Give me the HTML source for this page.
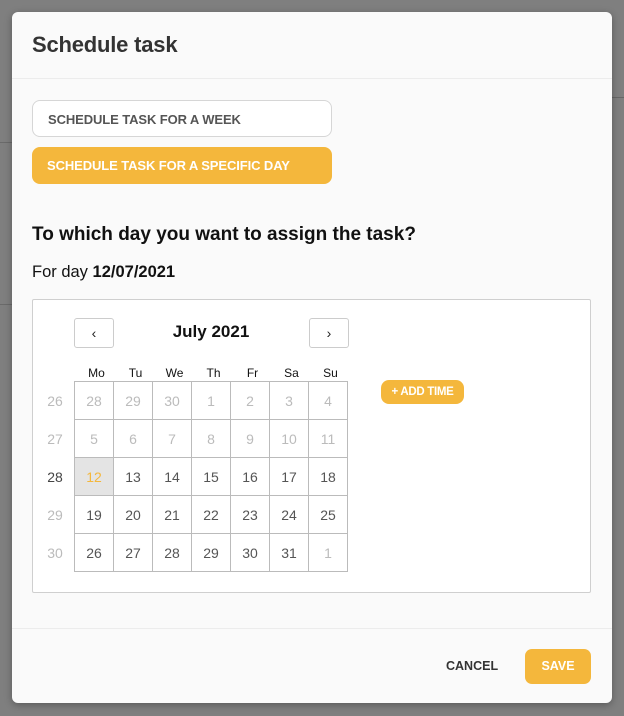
<!DOCTYPE html>
<html><head><style>
*{box-sizing:border-box;margin:0;padding:0}
body{width:624px;height:716px;background:#7f7f7f;font-family:"Liberation Sans",sans-serif;position:relative;overflow:hidden}
.modal{position:absolute;left:12px;top:12px;width:600px;height:691px;background:#fafafa;border-radius:6px;box-shadow:0 2px 8px rgba(0,0,0,.3)}
.hdr{height:67px;border-bottom:1px solid #ececec;padding:20px 20px}
.hdr h1{font-size:22px;font-weight:bold;color:#333;letter-spacing:-0.2px}
.btn{position:absolute;left:20px;width:300px;height:37px;border-radius:8px;font-size:13px;font-weight:bold;padding-left:15px;line-height:37px;letter-spacing:-0.1px}
.b1{top:88px;background:#fff;border:1px solid #d6d6d6;color:#555}
.b2{top:135px;background:#f4b73c;color:#fff}
.q{position:absolute;left:20px;top:212px;font-size:19px;font-weight:bold;color:#111}
.fd{position:absolute;left:20px;top:251px;font-size:16.5px;color:#111}
.cal{position:absolute;left:20px;top:287px;width:559px;height:294px;background:#fff;border:1px solid #cfcfcf;border-radius:2px}
.nav{position:absolute;top:18px;width:40px;height:30px;border:1px solid #ccc;border-radius:3px;text-align:center;line-height:28px;font-size:14px;color:#222}
.title{position:absolute;left:110px;width:136px;top:22px;text-align:center;font-size:17px;font-weight:bold;color:#111}
.dow{position:absolute;top:66px;width:39px;text-align:center;font-size:12px;color:#111}
.grid{position:absolute;left:41px;top:81px;border-collapse:collapse}
.grid td{width:39px;height:38px;border:1px solid #bbb;text-align:center;font-size:14px;color:#555}
.grid td.o{color:#bbb}
.grid td.s{background:#e4e4e4;color:#f4b73c}
.wk{position:absolute;left:10px;width:24px;text-align:center;font-size:14px;color:#bbb}
.add{position:absolute;left:348px;top:80px;width:83px;height:24px;border-radius:8px;background:#f4b73c;color:#fff;font-size:11.5px;font-weight:bold;line-height:24px;text-align:center;letter-spacing:-0.3px}
.ftr{position:absolute;left:0;top:616px;width:600px;border-top:1px solid #ececec}
.cancel{position:absolute;left:434px;top:647px;font-size:12.5px;font-weight:bold;color:#333}
.save{position:absolute;left:513px;top:637px;width:66px;height:35px;border-radius:7px;background:#f4b73c;color:#fff;font-size:12.5px;font-weight:bold;text-align:center;line-height:35px}
</style></head><body>
<div style="position:absolute;left:612px;top:97px;width:12px;height:1px;background:#666"></div>
<div style="position:absolute;left:0;top:142px;width:12px;height:1px;background:#6a6a6a"></div>
<div style="position:absolute;left:0;top:304px;width:12px;height:1px;background:#6a6a6a"></div>
<div class="modal">
<div class="hdr"><h1>Schedule task</h1></div>
<div class="btn b1">SCHEDULE TASK FOR A WEEK</div>
<div class="btn b2">SCHEDULE TASK FOR A SPECIFIC DAY</div>
<div class="q">To which day you want to assign the task?</div>
<div class="fd">For day <b>12/07/2021</b></div>
<div class="cal">
<div class="nav" style="left:41px">‹</div>
<div class="title">July 2021</div>
<div class="nav" style="left:276px">›</div>
<div class="dow" style="left:44px">Mo</div><div class="dow" style="left:83px">Tu</div><div class="dow" style="left:122px">We</div><div class="dow" style="left:161px">Th</div><div class="dow" style="left:200px">Fr</div><div class="dow" style="left:239px">Sa</div><div class="dow" style="left:278px">Su</div>
<div class="wk" style="top:93px">26</div><div class="wk" style="top:131px">27</div><div class="wk" style="top:169px;color:#444">28</div><div class="wk" style="top:207px">29</div><div class="wk" style="top:245px">30</div>
<table class="grid">
<tr><td class="o">28</td><td class="o">29</td><td class="o">30</td><td class="o">1</td><td class="o">2</td><td class="o">3</td><td class="o">4</td></tr>
<tr><td class="o">5</td><td class="o">6</td><td class="o">7</td><td class="o">8</td><td class="o">9</td><td class="o">10</td><td class="o">11</td></tr>
<tr><td class="s">12</td><td>13</td><td>14</td><td>15</td><td>16</td><td>17</td><td>18</td></tr>
<tr><td>19</td><td>20</td><td>21</td><td>22</td><td>23</td><td>24</td><td>25</td></tr>
<tr><td>26</td><td>27</td><td>28</td><td>29</td><td>30</td><td>31</td><td class="o">1</td></tr>
</table>
<div class="add">+ ADD TIME</div>
</div>
<div class="ftr"></div>
<div class="cancel">CANCEL</div>
<div class="save">SAVE</div>
</div>
</body></html>
